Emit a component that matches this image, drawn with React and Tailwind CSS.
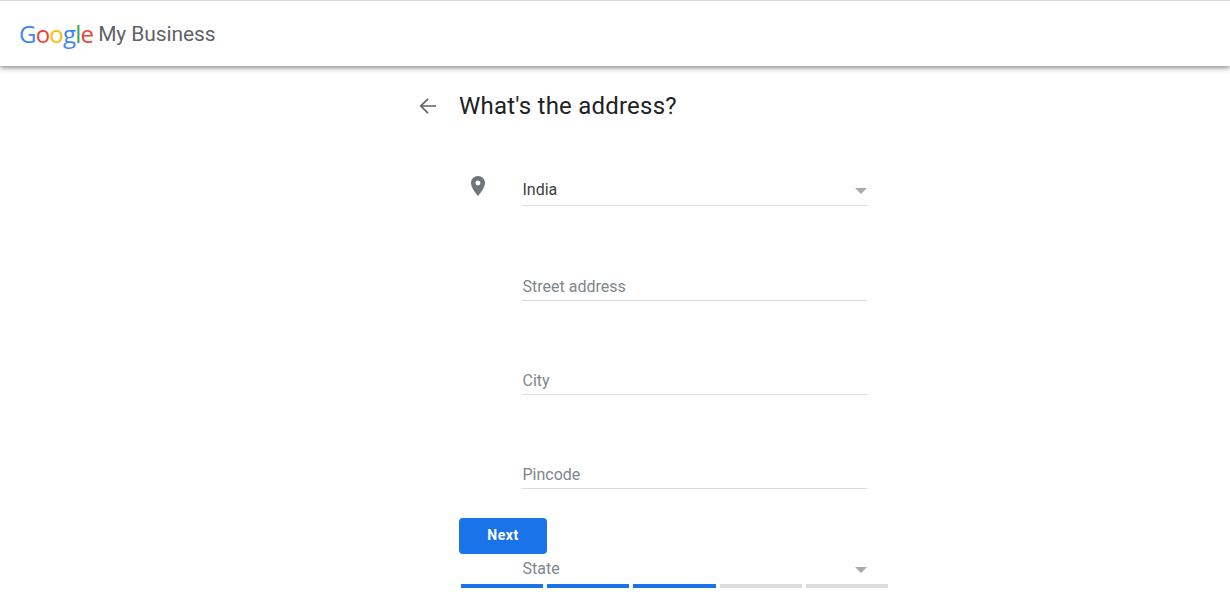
import React from 'react';

function Caret() {
    return <div className="w-0 h-0 border-x-[6px] border-x-transparent border-t-[6px] border-t-[#aaaaaa]" />;
}

function Field({ label, dark, caret, className }) {
    return (
        <div className={"ml-[63px] w-[345px] pl-[0.5px] flex items-center justify-between border-b border-[#dcdcdc] " + className}>
            <span className={"text-[16px] leading-[20px] font-['Roboto',sans-serif] " + (dark ? "text-[#3c4043]" : "text-[#80868b]")}>{label}</span>
            {caret && <div className="mt-[2px]"><Caret /></div>}
        </div>
    );
}

export default function App() {
    return (
        <div className="h-screen overflow-hidden bg-white font-['Roboto',sans-serif]">
            <header className="h-[66px] bg-white border-t border-[#d9d9d9] shadow-[0_2px_5px_rgba(0,0,0,0.45)] flex items-center pl-[19px]">
                <span className="font-['Open_Sans',sans-serif] text-[24px] leading-[30px] tracking-[-0.8px]">
                    <span className="text-[#4285f4]">G</span>
                    <span className="text-[#ea4335]">o</span>
                    <span className="text-[#fbbc05]">o</span>
                    <span className="text-[#4285f4]">g</span>
                    <span className="text-[#34a853]">l</span>
                    <span className="text-[#ea4335]">e</span>
                </span>
                <span className="ml-[5px] font-['Roboto',sans-serif] text-[21px] leading-[30px] tracking-[-0.1px] text-[#5f6368]">My Business</span>
            </header>

            <main className="ml-[459px] w-[430px]">
                <div className="relative h-[79px] flex items-center">
                    <svg className="absolute left-[-43px] top-[28px]" width="24" height="24" viewBox="0 0 24 24" fill="none" stroke="#5f6368" strokeWidth="1.7">
                        <path d="M20 12H5M12 4.8 4.8 12l7.2 7.2" />
                    </svg>
                    <h1 className="text-[24px] leading-[30px] text-[#202124] font-normal tracking-[0.22px]">What's the address?</h1>
                </div>

                <div className="relative">
                    <svg className="absolute left-[7px] top-[-6px]" width="24" height="24" viewBox="0 0 24 24" fill="#70757a">
                        <path d="M12 2C8.13 2 5 5.13 5 9c0 5.25 7 13 7 13s7-7.75 7-13c0-3.87-3.13-7-7-7zm0 9.5a2.5 2.5 0 1 1 0-5 2.5 2.5 0 0 1 0 5z" />
                    </svg>
                    <Field label="India" dark caret className="mt-[35px] pb-[5px]" />
                </div>
                <Field label="Street address" className="mt-[71px] pb-[3px]" />
                <Field label="City" className="mt-[70px] pb-[3px]" />
                <Field label="Pincode" className="mt-[70px] pb-[3px]" />

                <button className="mt-[29px] block w-[88px] h-[36px] pb-[2px] rounded-[4px] bg-[#1a73e8] text-white text-[14px] font-bold tracking-[0.5px]">Next</button>

                <div className="ml-[63px] w-[345px] h-[30px] pt-[5px] pl-[0.5px] flex items-start justify-between">
                    <span className="text-[16px] leading-[20px] text-[#80868b]">State</span>
                    <div className="mt-[8px]"><Caret /></div>
                </div>

                <div className="ml-[2px] w-[427px] flex gap-[4px]">
                    <div className="h-[4px] flex-1 bg-[#1a73e8]" />
                    <div className="h-[4px] flex-1 bg-[#1a73e8]" />
                    <div className="h-[4px] flex-1 bg-[#1a73e8]" />
                    <div className="h-[4px] flex-1 bg-[#dadce0]" />
                    <div className="h-[4px] flex-1 bg-[#dadce0]" />
                </div>
            </main>
        </div>
    );
}
